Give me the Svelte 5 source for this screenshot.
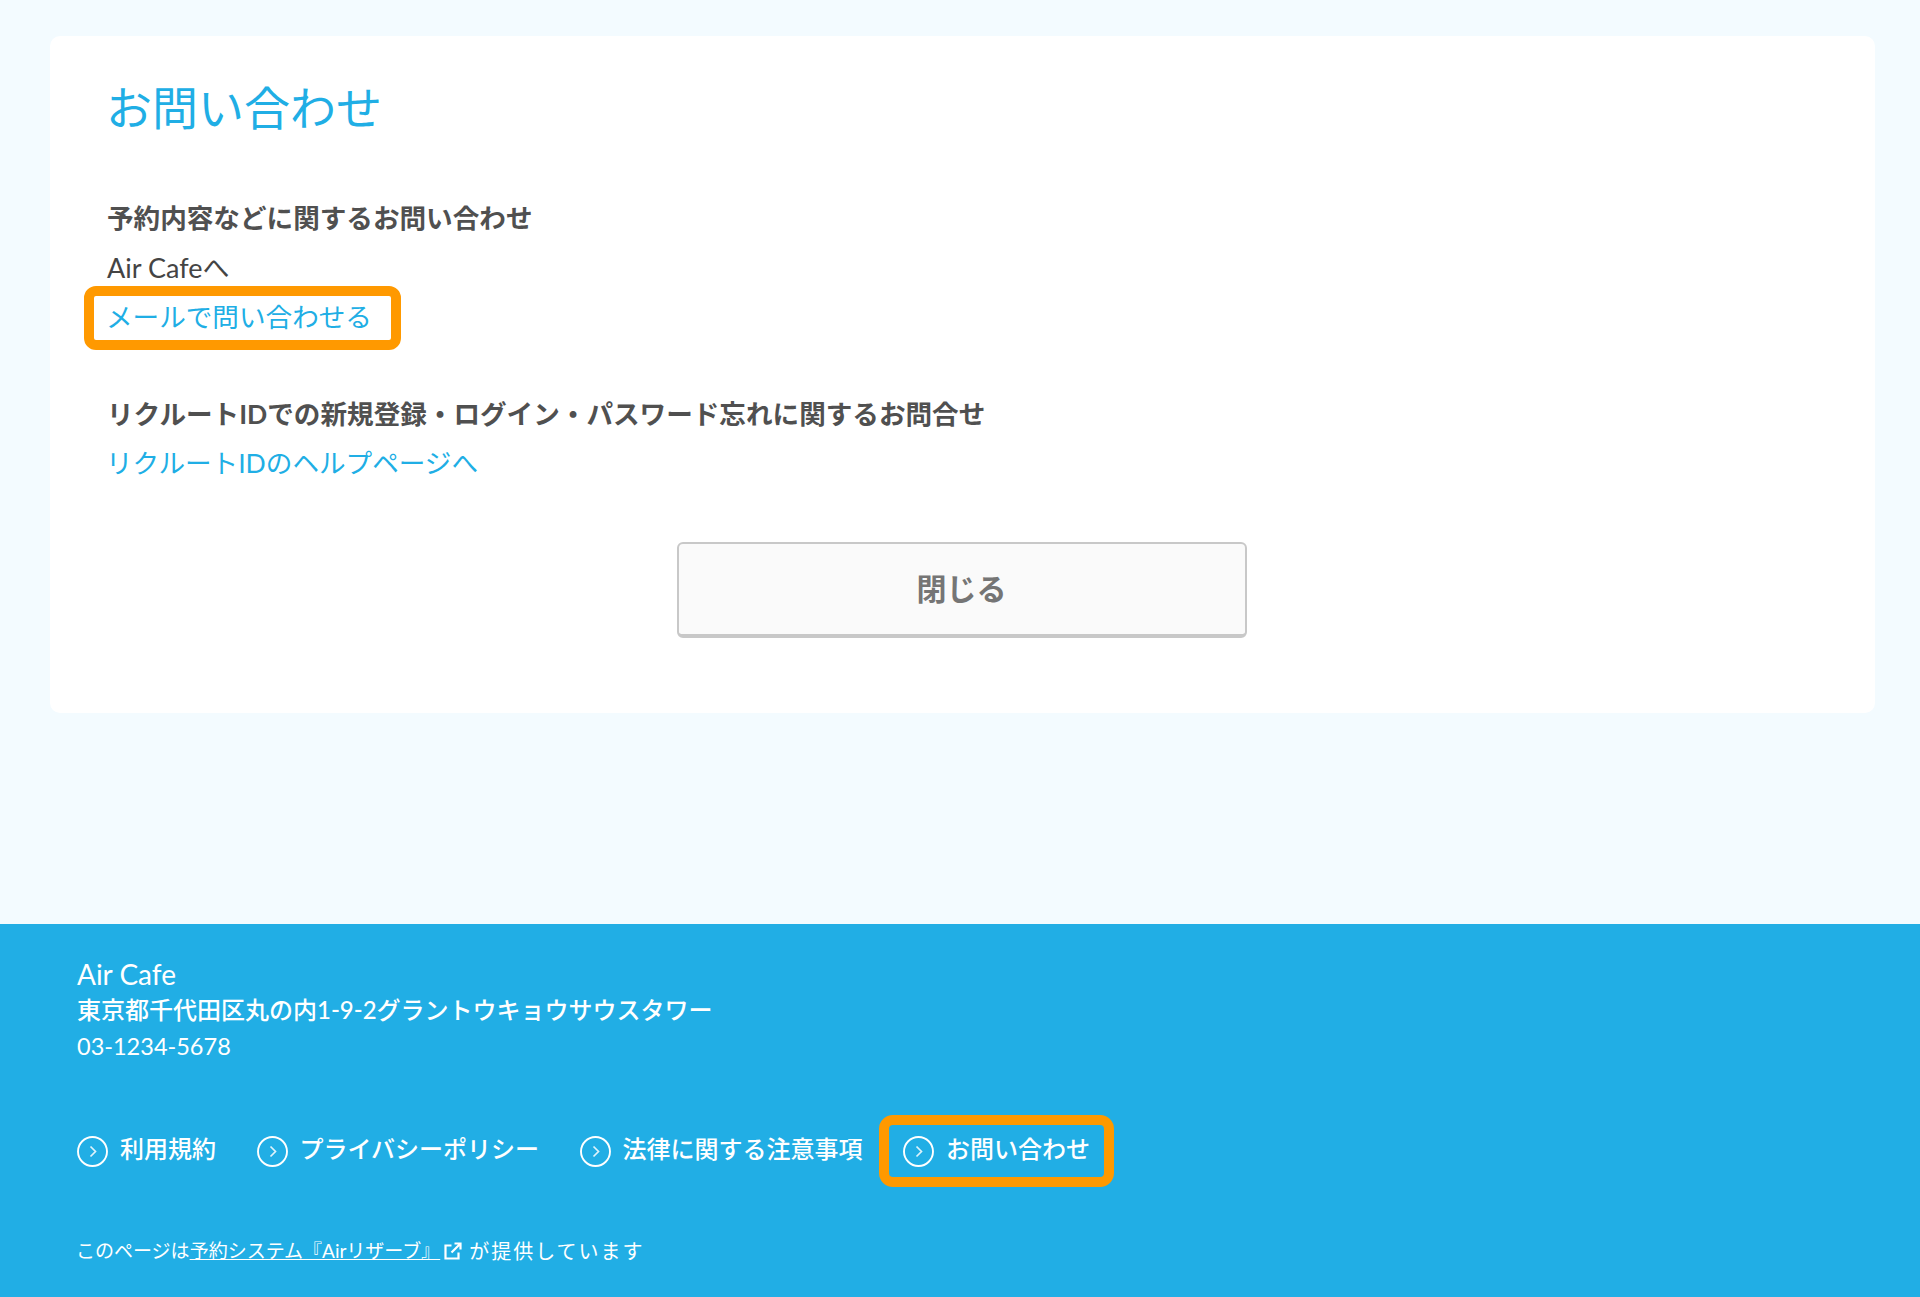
<script lang="ts">
  // Inquiry page: one card with two contact sections, then the shop footer.
  const navLinks = [
    { label: '利用規約', marked: false },
    { label: 'プライバシーポリシー', marked: false },
    { label: '法律に関する注意事項', marked: false },
    { label: 'お問い合わせ', marked: true }
  ]
</script>

<div class="page">
  <main class="main">
    <section class="card">
      <h1 class="title">お問い合わせ</h1>

      <h2 class="head first">予約内容などに関するお問い合わせ</h2>
      <p class="shop">Air Cafeへ</p>
      <a class="link marked" href="#mail">メールで問い合わせる</a>

      <h2 class="head second">リクルートIDでの新規登録・ログイン・パスワード忘れに関するお問合せ</h2>
      <a class="link help" href="#help">リクルートIDのヘルプページへ</a>

      <div class="actions">
        <button class="close" type="button">閉じる</button>
      </div>
    </section>
  </main>

  <footer class="footer">
    <div class="name">Air Cafe</div>
    <div class="address">東京都千代田区丸の内1-9-2グラントウキョウサウスタワー</div>
    <div class="tel">03-1234-5678</div>

    <nav class="nav">
      {#each navLinks as item}
        <a class="nav-item" class:marked={item.marked} href="#nav">
          <svg class="chevron" width="31" height="31" viewBox="0 0 31 31" fill="none" stroke="#fff">
            <circle cx="15.5" cy="15.5" r="14.5" stroke-width="1.9" />
            <path d="M13.5 10.5l5 5-5 5" stroke-width="1.7" opacity="0.85" />
          </svg>
          <span class="nav-label">{item.label}</span>
        </a>
      {/each}
    </nav>

    <p class="credit">
      このページは<a href="#air">予約システム『Airリザーブ』</a><svg class="ext" width="18" height="18" viewBox="0 0 18 18" fill="none" stroke="#fff" stroke-width="2.2"><path d="M7.5 3.5H1.5v13h13v-6" /><path d="M7.5 10.5L16 2M10.5 1.5h6v6" /></svg>
      <span class="credit-end">が提供しています</span>
    </p>
  </footer>
</div>

<style>
  :global(body) {
    margin: 0;
    background: #f3fbff;
  }
  .page {
    min-height: 100vh;
    display: flex;
    flex-direction: column;
    font-family: Lato, 'Noto Sans CJK JP', sans-serif;
    color: #505050;
  }
  .main {
    flex: 1;
    padding: 36px 45px 0 50px;
  }
  .card {
    background: #fff;
    border-radius: 10px;
    padding: 42px 58px 75px;
  }
  .title {
    margin: 0 0 0 -2px;
    font-size: 46px;
    font-weight: 400;
    line-height: 60px;
    color: #20aee5;
  }
  .head {
    margin: 0 0 0 -1px;
    font-size: 26.6px;
    line-height: 36px;
    font-weight: 700;
  }
  .first {
    margin-top: 62px;
  }
  .second {
    margin-top: 59px;
  }
  .shop {
    margin: 12px 0 0 -1px;
    font-size: 27px;
    line-height: 40px;
    color: #444;
  }
  .link {
    display: block;
    width: fit-content;
    margin-left: -2px;
    font-size: 26.6px;
    line-height: 40px;
    color: #20aee5;
    text-decoration: none;
  }
  .link.marked {
    position: relative;
    margin-top: 9px;
  }
  .link.help {
    margin-top: 11px;
  }
  .link.marked::after {
    content: '';
    position: absolute;
    left: -22px;
    top: -11px;
    width: 317px;
    height: 64px;
    box-sizing: border-box;
    border: 10px solid #f90;
    border-radius: 12px;
  }
  .actions {
    display: flex;
    justify-content: center;
    margin-top: 59px;
  }
  .close {
    width: 570px;
    height: 96px;
    margin-right: 2px;
    box-sizing: border-box;
    padding-bottom: 6px;
    background: #fafafa;
    border: 2px solid #c8c8c8;
    border-bottom-width: 4px;
    border-radius: 6px;
    font-family: inherit;
    font-size: 30px;
    font-weight: 700;
    color: #757575;
  }
  .footer {
    height: 373px;
    box-sizing: border-box;
    padding: 32px 77px 0;
    background: #21aee5;
    color: #fff;
  }
  .name {
    font-size: 28px;
    line-height: 36px;
    font-weight: 400;
  }
  .address {
    font-size: 24px;
    line-height: 36px;
    font-weight: 500;
  }
  .tel {
    font-size: 23.5px;
    line-height: 36px;
  }
  .nav {
    display: flex;
    align-items: center;
    gap: 40.5px;
    margin-top: 72px;
  }
  .nav-item {
    display: flex;
    align-items: center;
    gap: 12px;
    position: relative;
    color: #fff;
    text-decoration: none;
    font-size: 24px;
    font-weight: 500;
  }
  .nav-label {
    line-height: 26px;
    margin-bottom: 5px;
  }
  .nav-item.marked::after {
    content: '';
    position: absolute;
    left: -24px;
    right: -24px;
    top: -21px;
    bottom: -20px;
    border: 10px solid #f90;
    border-radius: 14px;
  }
  .credit {
    display: flex;
    align-items: center;
    margin: 69px 0 0 -1px;
    font-size: 19px;
    line-height: 30px;
  }
  .credit a {
    color: #fff;
  }
  .ext {
    margin-left: 4px;
  }
  .credit-end {
    margin-left: 7px;
    font-size: 20px;
    letter-spacing: 2px;
  }
</style>
